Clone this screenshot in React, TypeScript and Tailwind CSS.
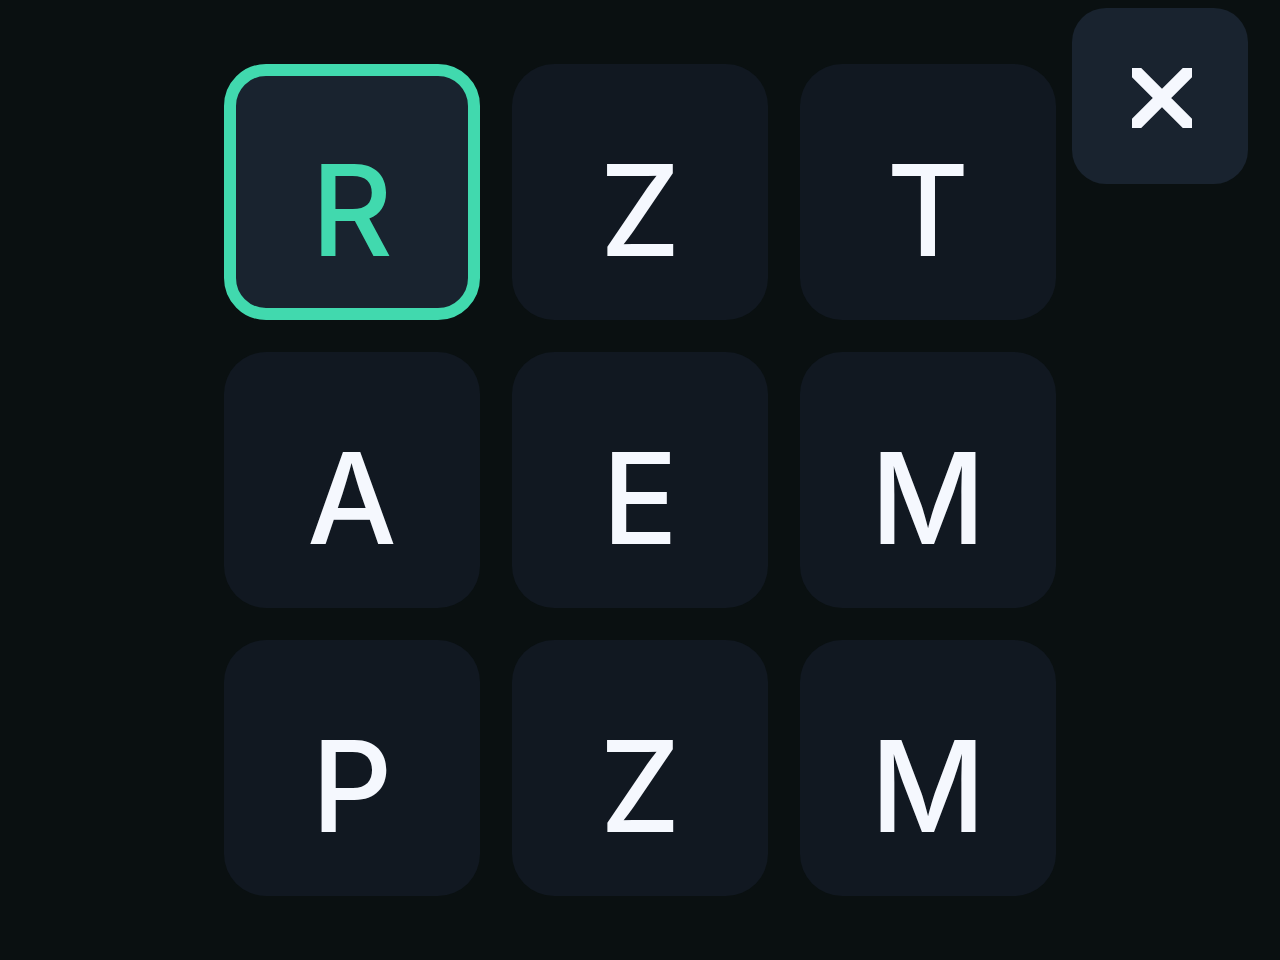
const tiles = ["R", "Z", "T", "A", "E", "M", "P", "Z", "M"];

export default function App() {
  const selected = 0;

  return (
    <div className="relative flex h-screen w-full items-center justify-center bg-[#0a1011] font-['Inter',sans-serif]">
      <div className="grid grid-cols-3 gap-8">
        {tiles.map((letter, i) => (
          <button
            key={i}
            className={`flex h-64 w-64 items-center justify-center rounded-[42px] pt-9 text-[126px] font-medium leading-none ${
              i === selected
                ? "border-[12px] border-[#41d9ae] bg-[#19232f] text-[#41d9ae]"
                : "bg-[#111821] text-[#f5f8fe]"
            }`}
          >
            {letter}
          </button>
        ))}
      </div>

      <button
        aria-label="Close"
        className="absolute right-8 top-2 flex h-44 w-44 items-center justify-center rounded-[34px] bg-[#19232f] pl-1 pt-1"
      >
        <svg width="60" height="60" viewBox="0 0 60 60">
          <path
            d="M-10 -10 L70 70 M70 -10 L-10 70"
            stroke="#f5f8fe"
            strokeWidth="13"
            fill="none"
          />
        </svg>
      </button>
    </div>
  );
}
